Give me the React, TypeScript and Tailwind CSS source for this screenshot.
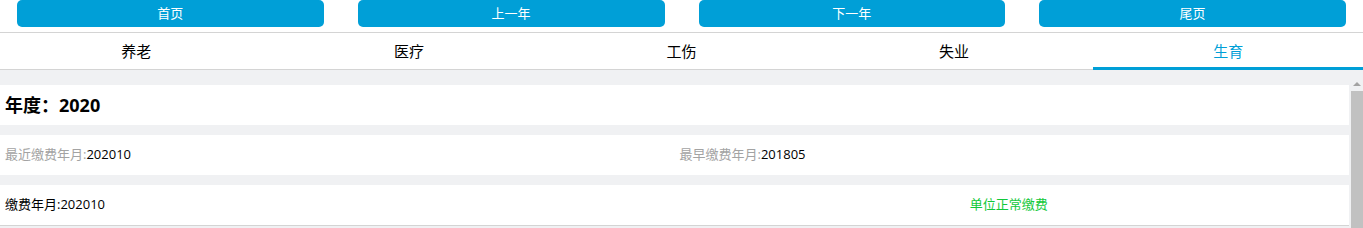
import React from 'react';

const App: React.FC = () => {
  const buttons = ['首页', '上一年', '下一年', '尾页'];
  const tabs = ['养老', '医疗', '工伤', '失业', '生育'];
  const active = 4;

  return (
    <div className="w-[1363px] h-[228px] overflow-hidden bg-white flex flex-col font-['Open_Sans','Noto_Sans_CJK_SC',sans-serif]">
      {/* pager buttons */}
      <div className="grid grid-cols-4 h-[33px] border-b border-[#d4d4d4]">
        {buttons.map((b) => (
          <div key={b} className="px-[17px]">
            <button className="w-full h-[27px] rounded-[5px] bg-[#009fd7] text-white text-[13px] leading-[27px]">
              {b}
            </button>
          </div>
        ))}
      </div>

      {/* insurance tabs */}
      <div className="grid grid-cols-5 h-[37px] border-b border-[#d4d4d4]">
        {tabs.map((t, i) => (
          <div
            key={t}
            className={
              i === active
                ? 'flex items-center justify-center text-[15px] text-[#009fd7] border-b-[3px] border-[#009fd7] -mb-px pt-[2px] ml-[3px]'
                : 'flex items-center justify-center text-[15px] text-black'
            }
          >
            {t}
          </div>
        ))}
      </div>

      {/* content + scrollbar */}
      <div className="flex flex-1 bg-[#f0f1f3]">
        <div className="flex-1 pt-[15px] flex flex-col gap-[10px]">
          <div className="h-[40px] bg-white flex items-center pl-[5px] text-[18px] font-bold text-black">
            年度：2020
          </div>
          <div className="h-[40px] bg-white grid grid-cols-2 items-center text-[13px]">
            <div className="pl-[5px]">
              <span className="text-[#a3a3a3]">最近缴费年月:</span>
              <span className="text-black">202010</span>
            </div>
            <div className="pl-[5px]">
              <span className="text-[#a3a3a3]">最早缴费年月:</span>
              <span className="text-black">201805</span>
            </div>
          </div>
          <div className="h-[41px] bg-white grid grid-cols-2 items-center text-[13px] border-b border-[#d4d4d4]">
            <div className="pl-[5px] text-black">缴费年月:202010</div>
            <div className="text-center text-[#11c83a] pr-[6px]">单位正常缴费</div>
          </div>
        </div>
        <div className="w-[14px] flex flex-col items-center pl-[2px]">
          <div className="h-[21px] w-full flex items-end justify-center pb-[5px]">
            <div className="w-0 h-0 border-l-[4px] border-r-[4px] border-b-[4px] border-l-transparent border-r-transparent border-b-[#a3a3a3]" />
          </div>
          <div className="flex-1 w-full bg-[#c1c1c1]" />
        </div>
      </div>
    </div>
  );
};

export default App;
